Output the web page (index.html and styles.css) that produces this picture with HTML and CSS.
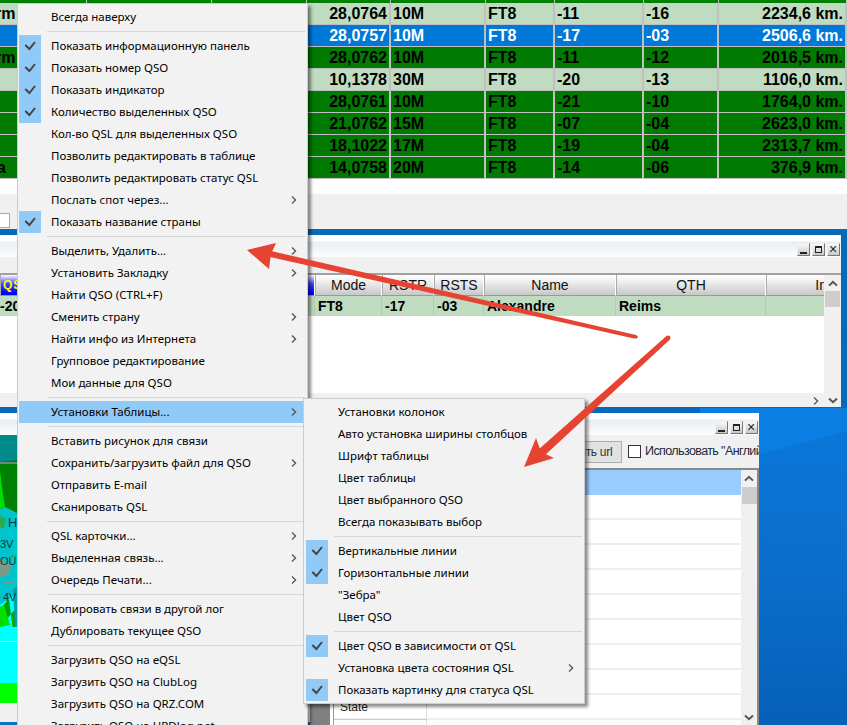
FILE: index.html
```html
<!DOCTYPE html>
<html lang="ru">
<head>
    <meta charset="UTF-8">
    <title>Log QSO</title>
    <link rel="stylesheet" href="styles.css">
</head>
<body>
<svg class="defs" width="0" height="0">
    <symbol id="ck" viewBox="0 0 22 22"><polyline points="6.3,10 10.4,14 16,7" fill="none" stroke="#444" stroke-width="2"/></symbol>
    <symbol id="ch" viewBox="0 0 6 8"><polyline points="1,0.5 4.6,4 1,7.5" fill="none" stroke="#555" stroke-width="1.3"/></symbol>
    <symbol id="up" viewBox="0 0 10 7"><polyline points="1,5.6 5,1.8 9,5.6" fill="none" stroke="#555" stroke-width="2"/></symbol>
    <symbol id="dn" viewBox="0 0 10 7"><polyline points="1,1.4 5,5.2 9,1.4" fill="none" stroke="#555" stroke-width="2"/></symbol>
</svg>

<div class="desktop">

    <!-- верхнее окно, таблица связей -->
    <div class="win win-log">
        <div class="log-top">
            <i></i><i></i><i></i><i></i><i></i><i></i><i></i><i></i><i></i>
        </div>
        <div class="row light"><span class="left">rm</span><span></span><span></span><span class="right">28,0764</span><span>10M</span><span>FT8</span><span>-11</span><span>-16</span><span class="right">2234,6 km.</span></div>
        <div class="row sel"><span></span><span></span><span></span><span class="right">28,0757</span><span>10M</span><span>FT8</span><span>-17</span><span>-03</span><span class="right">2506,6 km.</span></div>
        <div class="row green"><span class="left">rm</span><span></span><span></span><span class="right">28,0762</span><span>10M</span><span>FT8</span><span>-11</span><span>-12</span><span class="right">2016,5 km.</span></div>
        <div class="row light"><span></span><span></span><span></span><span class="right">10,1378</span><span>30M</span><span>FT8</span><span>-20</span><span>-13</span><span class="right">1106,0 km.</span></div>
        <div class="row green"><span></span><span></span><span></span><span class="right">28,0761</span><span>10M</span><span>FT8</span><span>-21</span><span>-10</span><span class="right">1764,0 km.</span></div>
        <div class="row green"><span></span><span></span><span></span><span class="right">21,0762</span><span>15M</span><span>FT8</span><span>-07</span><span>-04</span><span class="right">2623,0 km.</span></div>
        <div class="row green"><span></span><span></span><span></span><span class="right">18,1022</span><span>17M</span><span>FT8</span><span>-19</span><span>-04</span><span class="right">2313,7 km.</span></div>
        <div class="row green"><span class="left left-a">a</span><span></span><span></span><span class="right">14,0758</span><span>20M</span><span>FT8</span><span>-14</span><span>-06</span><span class="right">376,9 km.</span></div>
        <div class="log-white"></div>
        <div class="log-bar"><span class="check check-log"></span></div>
    </div>

    <!-- среднее окно -->
    <div class="win win-mid">
        <div class="title">
            <span class="wbtn"><b class="w-min"></b></span>
            <span class="wbtn"><b class="w-max"></b></span>
            <span class="wbtn"><b class="w-close">×</b></span>
        </div>
        <div class="mid-tools"></div>
        <div class="mid-body">
            <div class="mid-table">
                <div class="grid head">
                    <span class="hq">QSL</span><span>Mode</span><span>RSTR</span><span>RSTS</span><span>Name</span><span>QTH</span><span>Info</span>
                </div>
                <div class="grid data">
                    <span>-20</span><span>FT8</span><span>-17</span><span>-03</span><span>Alexandre</span><span>Reims</span><span></span>
                </div>
                <div class="mid-white"></div>
                <div class="hscroll"><svg class="hs-ch"><use href="#ch"/></svg></div>
            </div>
            <div class="vscroll">
                <svg class="sc-arrow"><use href="#up"/></svg>
                <div class="thumb"></div>
                <svg class="sc-arrow sc-end"><use href="#dn"/></svg>
            </div>
        </div>
    </div>

    <!-- нижнее окно с картой -->
    <div class="win win-map">
        <div class="title">
            <span class="wbtn"><b class="w-min"></b></span>
            <span class="wbtn"><b class="w-max"></b></span>
            <span class="wbtn"><b class="w-close">×</b></span>
        </div>
        <div class="map-body">
            <div class="pane">
                <svg class="map" viewBox="0 0 17 268" width="17" height="268">
                    <rect width="17" height="268" fill="#00c4cc"/>
                    <rect width="17" height="27" fill="#008b8b"/>
                    <polygon points="0,27 17,25 17,78 5,72 0,74" fill="#008000"/>
                    <polygon points="0,36 3,60 5,72 0,74" fill="#00dd00"/>
                    <polygon points="0,80 6,84 4,94 0,92" fill="#2eaa55"/>
                    <polygon points="0,142 8,140 12,130 0,124" fill="#7a9a8a"/>
                    <rect x="0" y="27" width="17" height="2" fill="#6a8a80"/>
                    <rect x="4" y="146" width="9" height="2" fill="#7a9a8a"/>
                    <rect x="11" y="120" width="5" height="2" fill="#2eaa55"/>
                    <polygon points="0,170 17,158 17,192 0,192" fill="#00ffff"/>
                    <polygon points="0,174 9,164 13,196 17,192 17,172 0,192" fill="#00a000"/>
                    <polygon points="0,172 4,170 10,190 0,192" fill="#00e000"/>
                    <polygon points="13,154 17,150 17,192 15,192" fill="#00a0a8"/>
                    <rect y="192" width="17" height="56" fill="#00ffff"/>
                    <rect y="206" width="17" height="1" fill="#b0ffff"/>
                    <rect y="248" width="17" height="20" fill="#00ff00"/>
                    <text x="8" y="92">H</text>
                    <text class="small" x="0" y="113">3V</text>
                    <text class="small" x="0" y="130">OU</text>
                    <text class="small" x="3" y="166">4V</text>
                </svg>
                <div class="pane-foot"></div>
                <div class="pane-blue"></div>
            </div>
            <div class="map-main">
                <div class="map-tools">
                    <button class="btn">Открыть url</button>
                    <span class="check"></span>
                    <span class="check-label">Использовать "Английский"</span>
                </div>
                <div class="list-wrap">
                    <div class="strip"></div>
                    <div class="list">
                        <div class="li li-sel"></div>
                        <div class="li"><span></span></div>
                        <div class="li"><span></span></div>
                        <div class="li"><span></span></div>
                        <div class="li"><span></span></div>
                        <div class="li"><span></span></div>
                        <div class="li"><span></span></div>
                        <div class="li"><span></span></div>
                        <div class="li"><span></span></div>
                        <div class="li"><span>State</span></div>
                        <div class="li"><span></span></div>
                    </div>
                    <div class="vscroll vs-map">
                        <svg class="sc-arrow"><use href="#up"/></svg>
                        <div class="thumb"></div>
                        <svg class="sc-arrow sc-end"><use href="#dn"/></svg>
                    </div>
                </div>
            </div>
        </div>
    </div>

    <!-- контекстное меню -->
    <div class="menu menu-main">
        <div class="mi"><span class="gut"></span><span class="txt">Всегда наверху</span></div>
        <div class="sep"></div>
        <div class="mi"><span class="gut on"><svg><use href="#ck"/></svg></span><span class="txt">Показать информационную панель</span></div>
        <div class="mi"><span class="gut on"><svg><use href="#ck"/></svg></span><span class="txt">Показать номер QSO</span></div>
        <div class="mi"><span class="gut on"><svg><use href="#ck"/></svg></span><span class="txt">Показать индикатор</span></div>
        <div class="mi"><span class="gut on"><svg><use href="#ck"/></svg></span><span class="txt">Количество выделенных QSO</span></div>
        <div class="mi"><span class="gut"></span><span class="txt">Кол-во QSL для выделенных QSO</span></div>
        <div class="mi"><span class="gut"></span><span class="txt">Позволить редактировать в таблице</span></div>
        <div class="mi"><span class="gut"></span><span class="txt">Позволить редактировать статус QSL</span></div>
        <div class="mi"><span class="gut"></span><span class="txt">Послать спот через...</span><svg class="arr"><use href="#ch"/></svg></div>
        <div class="mi"><span class="gut on"><svg><use href="#ck"/></svg></span><span class="txt">Показать название страны</span></div>
        <div class="sep"></div>
        <div class="mi"><span class="gut"></span><span class="txt">Выделить, Удалить...</span><svg class="arr"><use href="#ch"/></svg></div>
        <div class="mi"><span class="gut"></span><span class="txt">Установить Закладку</span><svg class="arr"><use href="#ch"/></svg></div>
        <div class="mi"><span class="gut"></span><span class="txt">Найти QSO (CTRL+F)</span></div>
        <div class="mi"><span class="gut"></span><span class="txt">Сменить страну</span><svg class="arr"><use href="#ch"/></svg></div>
        <div class="mi"><span class="gut"></span><span class="txt">Найти инфо из Интернета</span><svg class="arr"><use href="#ch"/></svg></div>
        <div class="mi"><span class="gut"></span><span class="txt">Групповое редактирование</span></div>
        <div class="mi"><span class="gut"></span><span class="txt">Мои данные для QSO</span></div>
        <div class="sep"></div>
        <div class="mi hot"><span class="gut"></span><span class="txt">Установки Таблицы...</span><svg class="arr"><use href="#ch"/></svg></div>
        <div class="sep"></div>
        <div class="mi"><span class="gut"></span><span class="txt">Вставить рисунок для связи</span></div>
        <div class="mi"><span class="gut"></span><span class="txt">Сохранить/загрузить файл для QSO</span><svg class="arr"><use href="#ch"/></svg></div>
        <div class="mi"><span class="gut"></span><span class="txt">Отправить E-mail</span></div>
        <div class="mi"><span class="gut"></span><span class="txt">Сканировать QSL</span></div>
        <div class="sep"></div>
        <div class="mi"><span class="gut"></span><span class="txt">QSL карточки...</span><svg class="arr"><use href="#ch"/></svg></div>
        <div class="mi"><span class="gut"></span><span class="txt">Выделенная связь...</span><svg class="arr"><use href="#ch"/></svg></div>
        <div class="mi"><span class="gut"></span><span class="txt">Очередь Печати...</span><svg class="arr"><use href="#ch"/></svg></div>
        <div class="sep"></div>
        <div class="mi"><span class="gut"></span><span class="txt">Копировать связи в другой лог</span></div>
        <div class="mi"><span class="gut"></span><span class="txt">Дублировать текущее QSO</span></div>
        <div class="sep"></div>
        <div class="mi"><span class="gut"></span><span class="txt">Загрузить QSO на eQSL</span></div>
        <div class="mi"><span class="gut"></span><span class="txt">Загрузить QSO на ClubLog</span></div>
        <div class="mi"><span class="gut"></span><span class="txt">Загрузить QSO на QRZ.COM</span></div>
        <div class="mi"><span class="gut"></span><span class="txt">Загрузить QSO на HRDlog.net</span></div>
    </div>

    <!-- подменю -->
    <div class="menu menu-sub">
        <div class="mi"><span class="gut"></span><span class="txt">Установки колонок</span></div>
        <div class="mi"><span class="gut"></span><span class="txt">Авто установка ширины столбцов</span></div>
        <div class="mi"><span class="gut"></span><span class="txt">Шрифт таблицы</span></div>
        <div class="mi"><span class="gut"></span><span class="txt">Цвет таблицы</span></div>
        <div class="mi"><span class="gut"></span><span class="txt">Цвет выбранного QSO</span></div>
        <div class="mi"><span class="gut"></span><span class="txt">Всегда показывать выбор</span></div>
        <div class="sep"></div>
        <div class="mi"><span class="gut on"><svg><use href="#ck"/></svg></span><span class="txt">Вертикальные линии</span></div>
        <div class="mi"><span class="gut on"><svg><use href="#ck"/></svg></span><span class="txt">Горизонтальные линии</span></div>
        <div class="mi"><span class="gut"></span><span class="txt">"Зебра"</span></div>
        <div class="mi"><span class="gut"></span><span class="txt">Цвет QSO</span></div>
        <div class="sep"></div>
        <div class="mi"><span class="gut on"><svg><use href="#ck"/></svg></span><span class="txt">Цвет QSO в зависимости от QSL</span></div>
        <div class="mi"><span class="gut"></span><span class="txt">Установка цвета состояния QSL</span><svg class="arr"><use href="#ch"/></svg></div>
        <div class="mi"><span class="gut on"><svg><use href="#ck"/></svg></span><span class="txt">Показать картинку для статуса QSL</span></div>
    </div>

    <!-- красные стрелки поверх всего -->
    <svg class="arrows" viewBox="0 0 847 725" width="847" height="725">
        <polygon points="271,251 636,335 638,336.5 637,338.5 634,338.5 270,257" fill="#e74333"/>
        <polygon points="247,250 276,243 271,254 269,269" fill="#e74333"/>
        <polygon points="667,335.5 670,336 670.5,339 544,456 538,450" fill="#e74333"/>
        <polygon points="524,467 536,438 541,452 554,458" fill="#e74333"/>
    </svg>
</div>
</body>
</html>
```

FILE: styles.css
```css
* {
    box-sizing: border-box;
}

body {
    margin: 0;
    font-family: "Liberation Sans", Arial, sans-serif;
}

.defs {
    position: absolute;
}

.desktop {
    position: relative;
    width: 847px;
    height: 725px;
    overflow: hidden;
    background: linear-gradient(#0a6cae 0, #0868bb 413px, #0a76d8 440px, #0a6fcc 560px, #0560b8 725px);
}

.desktop::before {
    content: "";
    position: absolute;
    left: 700px;
    top: 408px;
    width: 147px;
    height: 62px;
    background: #0a7ee2;
    clip-path: polygon(0 100%, 100% 38%, 100% 0, 0 0);
}

.win {
    position: absolute;
    overflow: hidden;
}

/* верхнее окно */
.win-log {
    left: 0;
    top: 0;
    width: 847px;
    height: 229px;
    display: flex;
    flex-direction: column;
    background: #fff;
}

.log-top,
.row {
    display: grid;
    grid-template-columns: 87px 125px 95px 84px 95px 69px 89px 75px 128px;
}

.log-top {
    height: 3px;
    background: #008000;
}

.log-top i {
    border-right: 1px solid #c0c0c0;
}

.row {
    height: 22px;
    font-size: 16px;
    font-weight: bold;
    line-height: 21px;
    color: #000;
}

.row span {
    padding-left: 2px;
    border-right: 2px solid #c0c0c0;
    border-bottom: 1px solid #c0c0c0;
    white-space: nowrap;
    overflow: hidden;
}

.row span.left {
    padding-left: 0;
    text-indent: -5px;
}

.row span.left-a {
    text-indent: -3px;
}

.row span.right {
    padding-left: 0;
    padding-right: 2px;
    text-align: right;
}

.light {
    background: #c0dcc0;
}

.green {
    background: #007a00;
}

.sel {
    background: #0078d7;
    color: #fff;
}

.log-white {
    height: 15px;
}

.log-bar {
    flex: 1;
    background: #f0f0f0;
    padding-top: 19px;
}

.check {
    display: inline-block;
    flex: none;
    width: 13px;
    height: 13px;
    background: #fff;
    border: 1px solid #333;
}

.check-log {
    display: block;
    width: 10px;
    height: 15px;
    border: 1px solid #aaa;
    border-left: 0;
}

/* заголовки окон */
.title {
    height: 22px;
    padding: 6px 1px 0 0;
    display: flex;
    justify-content: flex-end;
    align-items: flex-start;
    gap: 2px;
    background: linear-gradient(#fff 0, #fff 6px, #e8eef4 7px, #fdfdfd 22px);
}

.wbtn {
    position: relative;
    width: 13px;
    height: 13px;
    margin-top: 2px;
    background: linear-gradient(#f8f8f8, #c8c8c8);
    border: 1px solid;
    border-color: #eee #777 #777 #eee;
}

.wbtn b {
    position: absolute;
    left: 2px;
    color: #222;
}

.w-min {
    bottom: 1px;
    width: 7px;
    height: 2px;
    background: #222;
}

.w-max {
    top: 2px;
    width: 7px;
    height: 7px;
    border: 1px solid #222;
    border-top-width: 2px;
}

.w-close {
    left: 1px !important;
    top: -3px;
    font: normal 14px/16px "Liberation Sans", sans-serif;
}

/* среднее окно */
.win-mid {
    left: 0;
    top: 235px;
    width: 841px;
    height: 172px;
    display: flex;
    flex-direction: column;
    background: #fff;
}

.mid-tools {
    height: 18px;
    background: #f0f0f0;
    border-bottom: 2px solid #a0a0a0;
}

.mid-body {
    flex: 1;
    display: flex;
    min-height: 0;
}

.mid-table {
    flex: 1;
    display: flex;
    flex-direction: column;
    min-width: 0;
}

.grid {
    display: grid;
    grid-template-columns: 315px 67px 52px 50px 132px 150px 122px;
    overflow: hidden;
}

.head {
    height: 21px;
    font-size: 14px;
    line-height: 20px;
    text-align: center;
    color: #111;
}

.head span {
    background: linear-gradient(#fff, #f0f0f0 30%, #c8c8c8);
    border-right: 1px solid #fff;
    border-bottom: 1px solid #999;
    border-left: 1px solid #aaa;
    white-space: nowrap;
}

.head span.hq {
    padding: 0 0 0 2px;
    text-align: left;
    font-size: 12px;
    font-weight: bold;
    letter-spacing: 1px;
    color: #ffff00;
    background: linear-gradient(#fff 0, #4040ff 45%, #0000ff 90%);
}

.data {
    height: 20px;
    font-size: 14px;
    font-weight: bold;
    line-height: 20px;
    color: #000;
    background: #c0dcc0;
}

.data span {
    padding-left: 3px;
    border-right: 1px solid #b4c8b4;
    border-bottom: 1px solid #b4c8b4;
    white-space: nowrap;
}

.data span:first-child {
    padding-left: 0;
}

.mid-white {
    flex: 1;
    background: #fff;
}

.hscroll {
    height: 14px;
    padding: 4px 5px 0 0;
    display: flex;
    justify-content: flex-end;
    background: #f0f0f0;
}

.hs-ch {
    width: 6px;
    height: 8px;
}

.vscroll {
    flex: none;
    width: 17px;
    display: flex;
    flex-direction: column;
    align-items: center;
    background: #f0f0f0;
}

.thumb {
    width: 15px;
    height: 16px;
    background: #cdcdcd;
}

.sc-arrow {
    flex: none;
    width: 10px;
    height: 7px;
    margin: 5px 0 4px;
}

.sc-end {
    margin: auto 0 3px;
}

/* нижнее окно */
.win-map {
    left: 0;
    top: 413px;
    width: 759px;
    height: 312px;
    display: flex;
    flex-direction: column;
    background: #f0f0f0;
}

.map-body {
    flex: 1;
    display: flex;
    min-height: 0;
}

.pane {
    flex: none;
    width: 310px;
    display: flex;
    flex-direction: column;
}

.map {
    display: block;
    flex: none;
}

.map text {
    font-size: 13px;
    fill: #12343c;
}

.map text.small {
    font-size: 11px;
}

.pane-foot {
    height: 19px;
    background: #f0f0f0;
}

.pane-blue {
    flex: 1;
    background: #0a72c4;
}

.map-main {
    flex: 1;
    display: flex;
    flex-direction: column;
    min-width: 0;
}

.map-tools {
    flex: none;
    height: 35px;
    padding: 6px 0 0 222px;
    display: flex;
    align-items: flex-start;
    background: #f0f0f0;
    border-bottom: 2px solid #888;
    white-space: nowrap;
}

.btn {
    flex: none;
    width: 90px;
    height: 22px;
    padding: 0 0 0 10px;
    font: 12px "Liberation Sans", sans-serif;
    letter-spacing: -.3px;
    color: #333;
    background: #e1e1e1;
    border: 1px solid #adadad;
}

.map-tools .check {
    margin: 4px 4px 0 6px;
}

.check-label {
    font-size: 12.5px;
    letter-spacing: -.6px;
    line-height: 20px;
    color: #1a2a3a;
}

.list-wrap {
    flex: 1;
    display: flex;
    min-height: 0;
    background: #fff;
    border-right: 2px solid #888;
}

.strip {
    flex: none;
    width: 23px;
    margin-top: 0;
    background: #808080;
    border-right: 3px solid #fff;
}

.list {
    flex: 1;
    min-width: 0;
    border-left: 1px solid #999;
    background: #fff;
}

.li {
    height: 25px;
    border-bottom: 2px solid #eee;
}

.li span {
    display: block;
    width: 93px;
    height: 25px;
    padding: 5px 0 0 6px;
    font-size: 12px;
    color: #222;
    border-right: 1px solid #ddd;
    border-bottom: 1px solid #ccc;
}

.li-sel {
    background: #99ccff;
    border-bottom: 0;
}

.vs-map {
    width: 16px;
}

.vs-map .thumb {
    height: 17px;
    margin-top: 1px;
}

.vs-map .sc-end {
    margin-bottom: 4px;
}

/* меню */
.menu {
    position: absolute;
    padding: 2px 1px;
    background: #f2f2f2;
    border: 1px solid #ccc;
    box-shadow: 3px 3px 3px rgba(0, 0, 0, .45);
    font-family: "Noto Sans", sans-serif;
    font-size: 11.5px;
    color: #000;
}

.menu-main {
    left: 17px;
    top: 3px;
    width: 291px;
}

.menu-sub {
    left: 303px;
    top: 398px;
    width: 282px;
    height: 306px;
    padding-left: 2px;
}

.mi {
    display: flex;
    align-items: center;
    height: 22px;
    white-space: nowrap;
}

.hot {
    background: #91c9f7;
}

.gut {
    flex: none;
    width: 22px;
    height: 22px;
}

.gut svg {
    display: block;
    width: 22px;
    height: 22px;
}

.gut.on {
    background: #91c9f7;
}

.txt {
    flex: 1;
    margin-left: 10px;
    padding-bottom: 2px;
}

.arr {
    flex: none;
    width: 6px;
    height: 8px;
    margin-right: 9px;
}

.sep {
    height: 1px;
    margin: 3px 1px 3px 28px;
    background: #d7d7d7;
}

.arrows {
    position: absolute;
    left: 0;
    top: 0;
}
```
